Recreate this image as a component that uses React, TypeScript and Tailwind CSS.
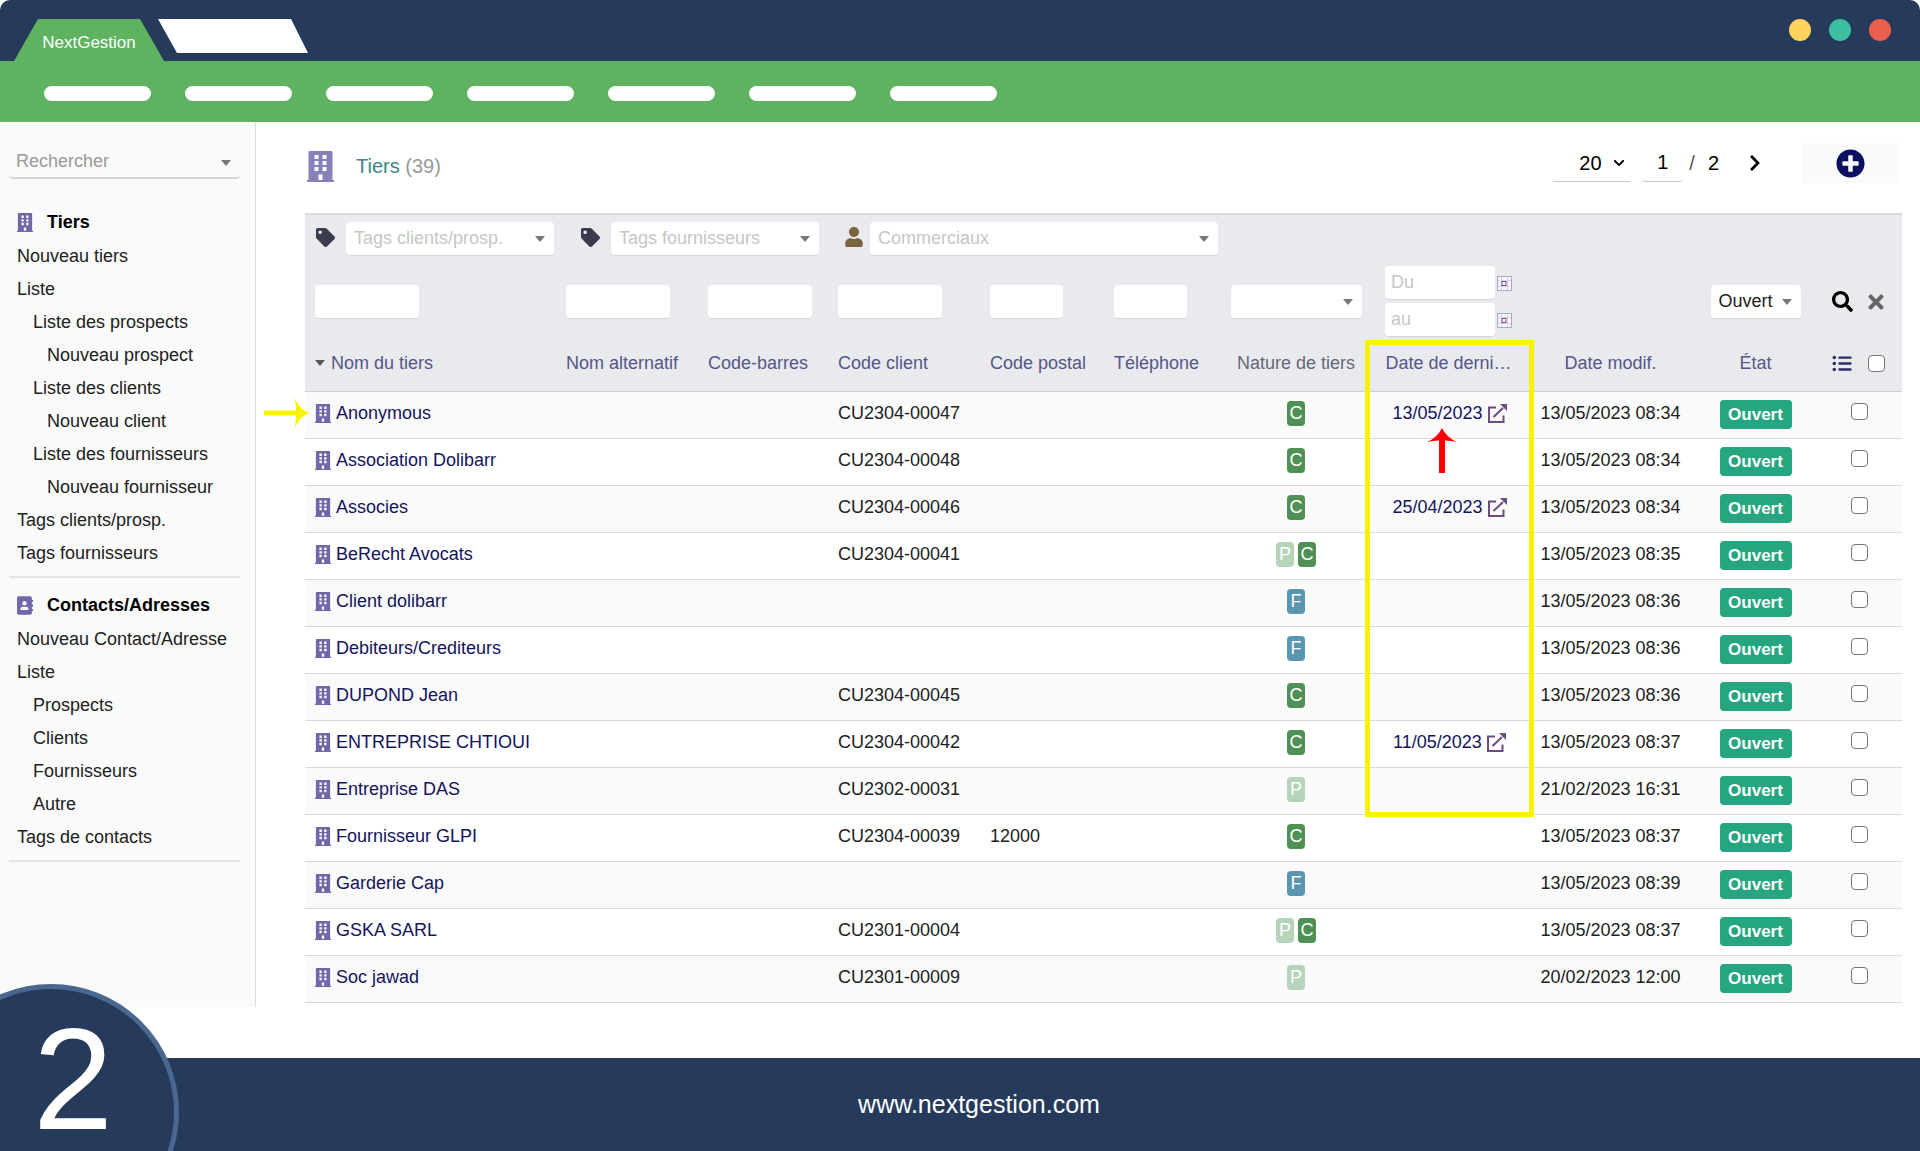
import React, { useState } from 'react';
import {
  FaAddressBook,
  FaChevronDown,
  FaChevronRight,
  FaListUl,
  FaPlusCircle,
  FaSearch,
  FaTag,
  FaTimes,
  FaUser,
} from 'react-icons/fa';

type Nature = 'C' | 'P' | 'F';

interface Company {
  name: string;
  code?: string;
  zip?: string;
  nature: Nature[];
  lastDate?: string;
  modified: string;
}

const companies: Company[] = [
  { name: 'Anonymous', code: 'CU2304-00047', nature: ['C'], lastDate: '13/05/2023', modified: '13/05/2023 08:34' },
  { name: 'Association Dolibarr', code: 'CU2304-00048', nature: ['C'], modified: '13/05/2023 08:34' },
  { name: 'Associes', code: 'CU2304-00046', nature: ['C'], lastDate: '25/04/2023', modified: '13/05/2023 08:34' },
  { name: 'BeRecht Avocats', code: 'CU2304-00041', nature: ['P', 'C'], modified: '13/05/2023 08:35' },
  { name: 'Client dolibarr', nature: ['F'], modified: '13/05/2023 08:36' },
  { name: 'Debiteurs/Crediteurs', nature: ['F'], modified: '13/05/2023 08:36' },
  { name: 'DUPOND Jean', code: 'CU2304-00045', nature: ['C'], modified: '13/05/2023 08:36' },
  { name: 'ENTREPRISE CHTIOUI', code: 'CU2304-00042', nature: ['C'], lastDate: '11/05/2023', modified: '13/05/2023 08:37' },
  { name: 'Entreprise DAS', code: 'CU2302-00031', nature: ['P'], modified: '21/02/2023 16:31' },
  { name: 'Fournisseur GLPI', code: 'CU2304-00039', zip: '12000', nature: ['C'], modified: '13/05/2023 08:37' },
  { name: 'Garderie Cap', nature: ['F'], modified: '13/05/2023 08:39' },
  { name: 'GSKA SARL', code: 'CU2301-00004', nature: ['P', 'C'], modified: '13/05/2023 08:37' },
  { name: 'Soc jawad', code: 'CU2301-00009', nature: ['P'], modified: '20/02/2023 12:00' },
];

const tiersMenu = [
  { label: 'Nouveau tiers', level: 0 },
  { label: 'Liste', level: 0 },
  { label: 'Liste des prospects', level: 1 },
  { label: 'Nouveau prospect', level: 2 },
  { label: 'Liste des clients', level: 1 },
  { label: 'Nouveau client', level: 2 },
  { label: 'Liste des fournisseurs', level: 1 },
  { label: 'Nouveau fournisseur', level: 2 },
  { label: 'Tags clients/prosp.', level: 0 },
  { label: 'Tags fournisseurs', level: 0 },
];

const contactsMenu = [
  { label: 'Nouveau Contact/Adresse', level: 0 },
  { label: 'Liste', level: 0 },
  { label: 'Prospects', level: 1 },
  { label: 'Clients', level: 1 },
  { label: 'Fournisseurs', level: 1 },
  { label: 'Autre', level: 1 },
  { label: 'Tags de contacts', level: 0 },
];

const indent = ['pl-2', 'pl-6', 'pl-[38px]'];

const natureColor: Record<Nature, string> = {
  C: 'bg-[#4f9155]',
  P: 'bg-[#b5d4b9]',
  F: 'bg-[#5a96b0]',
};

const field = 'h-[34px] rounded-[4px] bg-white border-b border-[#d6d6da] outline-none placeholder:text-[#c6c6c6]';
const checkbox = 'block size-[17px] shrink-0 appearance-none rounded-[4px] border border-[#767676] bg-white checked:bg-[#263b5c]';

function Caret({ className = '' }: { className?: string }) {
  return (
    <svg viewBox="0 0 10 6" className={`h-[6px] w-[10px] pointer-events-none ${className}`} fill="currentColor">
      <path d="M0 0h10L5 6z" />
    </svg>
  );
}

function BuildingIcon({ className = '' }: { className?: string }) {
  return (
    <svg viewBox="0 0 27 31" preserveAspectRatio="none" className={className} fill="currentColor" fillRule="evenodd">
      <path d="M2.500 0h22a1 1 0 0 1 1 1v28h1.500v2H0v-2h1.500V1a1 1 0 0 1 1-1zM7.500 4v4h4V4zM15.500 4v4h4V4zM7.500 10v4h4v-4zM15.500 10v4h4v-4zM7.500 16v4h4v-4zM15.500 16v4h4v-4zM11.500 23.500V29h4v-5.500z" />
    </svg>
  );
}

// Native select with the flat look and a small triangle on the right
function Select({ label, className = '', tone = 'text-[#c6c6c6]', children }: {
  label: string;
  className?: string;
  tone?: string;
  children?: React.ReactNode;
}) {
  return (
    <span className={`relative inline-flex items-center align-middle ${className}`}>
      <select aria-label={label} className={`${field} ${tone} w-full appearance-none pl-2 pr-6`}>
        {children}
      </select>
      <Caret className="absolute right-[9px] text-[#777]" />
    </span>
  );
}

function ExternalIcon() {
  return (
    <svg viewBox="0 0 19 19" className="size-[19px]" fill="none" stroke="#6b4c80" strokeWidth="2">
      <path d="M8 3.500H1v14.500h14.500V11.500M5.500 13L15 4" />
      <path d="M12 0h7v7z" fill="#6b4c80" stroke="none" />
    </svg>
  );
}

function CalendarIcon() {
  return (
    <svg viewBox="0 0 15 15" className="size-[15px]">
      <rect x="0.500" y="0.500" width="14" height="14" fill="#f6f6fa" stroke="#a9a9c8" />
      <path d="M1 4.500h13M1 10.500h13M4.500 1v13M10.500 1v13" stroke="#d4d4e2" />
      <rect x="5" y="5.500" width="4" height="4" fill="#fff" stroke="#7d4a9c" />
    </svg>
  );
}

function MenuSection({ title, icon, items }: {
  title: string;
  icon: React.ReactNode;
  items: { label: string; level: number }[];
}) {
  return (
    <section className="border-b-2 border-[#e3e3e3] pb-[6px]">
      <h2 className="flex h-9 items-center pl-2 font-bold text-black">
        <span className="w-[30px] text-[#6f67a8]">{icon}</span>
        {title}
      </h2>
      <ul>
        {items.map((item) => (
          <li key={item.label} className={`h-[33px] leading-[33px] whitespace-nowrap ${indent[item.level]}`}>
            <a href="#">{item.label}</a>
          </li>
        ))}
      </ul>
    </section>
  );
}

function Row({ company, first }: { company: Company; first: boolean }) {
  return (
    <tr className="h-[47px] border-b border-[#d9d9d9] odd:bg-[#fafafa]">
      <td className="relative pl-[10px] pb-[2px]">
        {first && (
          <svg viewBox="0 0 45 30" className="absolute -left-[41px] top-[6px] h-[30px] w-[45px]" fill="#f8f400">
            <path d="M0 12.500h32C32 8 31.500 4 30.500 0 34 7 38 12 45 15 38 18 34 23 30.500 30c1-4 1.500-8 1.500-12.500H0z" />
          </svg>
        )}
        <a href="#" className="flex items-center gap-[5px] text-[#14145a]">
          <BuildingIcon className="h-[19px] w-4 text-[#6f67a8]" />
          {company.name}
        </a>
      </td>
      <td />
      <td />
      <td className="pl-[10px] pb-[2px]">{company.code}</td>
      <td className="pl-[10px] pb-[2px]">{company.zip}</td>
      <td />
      <td className="pb-[2px]">
        <div className="flex justify-center gap-1">
          {company.nature.map((n) => (
            <span key={n} className={`h-[25px] w-[18px] rounded-[4px] text-center leading-[25px] text-white ${natureColor[n]}`}>
              {n}
            </span>
          ))}
        </div>
      </td>
      <td className="relative pb-[2px]">
        {company.lastDate && (
          <a href="#" className="flex items-center justify-center gap-[5px] pl-[2px] text-[#14145a]">
            {company.lastDate}
            <ExternalIcon />
          </a>
        )}
        {first && (
          <svg viewBox="0 0 30 45" className="absolute left-[57px] top-[36px] z-10 h-[45px] w-[30px]" fill="#fe0000">
            <path d="M15 0c3 6 8 11 15 14-4-1-8-1.500-12-1.500V45h-6V12.500C8 12.500 4 13 0 14 7 11 12 6 15 0z" />
          </svg>
        )}
      </td>
      <td className="pb-[2px] text-center">{company.modified}</td>
      <td>
        <span className="mx-auto block h-[29px] w-[72px] rounded-[4px] bg-[#25a580] text-center text-[17px] font-bold leading-[29px] text-white">
          Ouvert
        </span>
      </td>
      <td className="pb-[6px]">
        <input type="checkbox" aria-label={company.name} className={`${checkbox} mx-auto`} />
      </td>
    </tr>
  );
}

export default function App() {
  const [search, setSearch] = useState('');

  return (
    <div className="flex min-h-screen flex-col overflow-hidden bg-white font-['Liberation_Sans',Arial,sans-serif] text-[18px] text-[#212121]">
      {/* Window bar */}
      <header className="rounded-t-[10px] bg-[#263b5c]">
        <div className="flex h-[61px] items-end pl-[14px]">
          <div className="relative flex h-[42px] w-[150px] items-center justify-center pt-[6px] text-[17px] text-white">
            <svg viewBox="0 0 150 42" className="absolute inset-0 size-full" fill="#5eb260">
              <path d="M24 0h102l24 42H0z" />
            </svg>
            <span className="relative">NextGestion</span>
          </div>
          <svg viewBox="0 0 150 42" className="-ml-[6px] h-[42px] w-[150px]" fill="#fff">
            <path d="M0 0h133l17 34H19z" />
          </svg>
          <div className="ml-auto mr-[29px] flex gap-[18px] self-center pb-[2px]">
            <span className="size-[22px] rounded-full bg-[#ffd35e]" />
            <span className="size-[22px] rounded-full bg-[#3dbfa2]" />
            <span className="size-[22px] rounded-full bg-[#e9604f]" />
          </div>
        </div>
        <nav className="flex h-[61px] items-center gap-[34px] bg-[#5eb260] pl-11 pt-1">
          {[...Array(7)].map((_, i) => (
            <span key={i} className="h-[15px] w-[107px] rounded-full bg-white" />
          ))}
        </nav>
      </header>

      <div className="flex flex-1 items-start pb-[51px]">
        {/* Left menu */}
        <aside className="w-64 shrink-0 self-stretch border-r border-[#dcdcdc] bg-[#fafafa] pl-[9px] pr-[15px] pt-5">
          <div className="relative mb-[25px] flex items-center">
            <input
              type="text"
              value={search}
              onChange={(e) => setSearch(e.target.value)}
              aria-label="Rechercher"
              placeholder="Rechercher"
              className="h-[37px] w-full rounded-[4px] border-b-2 border-[#d4d4d4] pl-[7px] pt-1 outline-none placeholder:text-[#999]"
            />
            <Caret className="absolute right-[9px] top-[18px] text-[#777]" />
          </div>
          <MenuSection title="Tiers" icon={<BuildingIcon className="h-[19px] w-4" />} items={tiersMenu} />
          <div className="pt-[9px]">
            <MenuSection title="Contacts/Adresses" icon={<FaAddressBook className="h-[19px] w-4" />} items={contactsMenu} />
          </div>
        </aside>

        <main className="min-w-0 flex-1 pl-[49px] pr-[18px]">
          <div className="flex h-[91px] items-start pt-[21px]">
            <h1 className="flex h-[46px] items-center text-[20px] text-[#3b8585]">
              <BuildingIcon className="ml-[2px] mr-[22px] h-[31px] w-[27px] text-[#8681b6]" />
              Tiers&nbsp;<span className="text-[#999]">(39)</span>
            </h1>
            <div className="ml-auto flex h-10 items-center text-[20px] text-black">
              <span className="relative flex items-center">
                <select aria-label="Lignes par page" className="h-[37px] w-[77px] appearance-none border-b border-[#c8c8c8] pl-[26px] outline-none">
                  <option>20</option>
                </select>
                <FaChevronDown className="pointer-events-none absolute right-[5px] size-3" />
              </span>
              <input type="text" aria-label="Page" defaultValue="1" className="ml-3 h-[37px] w-[41px] rounded-[4px] border-b border-[#c8c8c8] text-center outline-none" />
              <span className="ml-[6px] text-[#555]">/</span>
              <span className="ml-[13px]">2</span>
              <button type="button" aria-label="Suivant" className="ml-[28px]">
                <FaChevronRight className="h-[18px] w-4" />
              </button>
              <button type="button" aria-label="Nouveau tiers" className="ml-[38px] mr-[3px] flex h-10 w-[98px] items-center justify-center bg-[#fafafa]">
                <FaPlusCircle className="size-[29px] text-[#0b1060]" />
              </button>
            </div>
          </div>

          <div className="flex h-[50px] items-center border-t-2 border-[#d9d9dc] bg-[#e9eaed] pl-[11px]">
            <FaTag className="mr-[11px] mb-1 size-[19px] text-[#3b3b50]" />
            <Select label="Tags clients/prosp." className="w-[208px]">
              <option>Tags clients/prosp.</option>
            </Select>
            <FaTag className="ml-[27px] mr-[11px] mb-1 size-[19px] text-[#3b3b50]" />
            <Select label="Tags fournisseurs" className="w-[208px]">
              <option>Tags fournisseurs</option>
            </Select>
            <FaUser className="ml-[26px] mr-[7px] mb-1 h-[20px] w-[18px] text-[#7b6340]" />
            <Select label="Commerciaux" className="w-[348px]">
              <option>Commerciaux</option>
            </Select>
          </div>

          <table className="w-full table-fixed border-collapse">
            <colgroup>
              <col className="w-[251px]" />
              <col className="w-[142px]" />
              <col className="w-[130px]" />
              <col className="w-[152px]" />
              <col className="w-[124px]" />
              <col className="w-[118px]" />
              <col className="w-[148px]" />
              <col className="w-[157px]" />
              <col className="w-[167px]" />
              <col className="w-[123px]" />
              <col className="w-[85px]" />
            </colgroup>
            <thead className="bg-[#e9eaed] text-left text-[#55568a]">
              <tr className="h-[77px]">
                <td className="pl-[10px]"><input type="text" aria-label="Nom du tiers" className={`${field} w-[104px]`} /></td>
                <td className="pl-[10px]"><input type="text" aria-label="Nom alternatif" className={`${field} w-[104px]`} /></td>
                <td className="pl-[10px]"><input type="text" aria-label="Code-barres" className={`${field} w-[104px]`} /></td>
                <td className="pl-[10px]"><input type="text" aria-label="Code client" className={`${field} w-[104px]`} /></td>
                <td className="pl-[10px]"><input type="text" aria-label="Code postal" className={`${field} w-[73px]`} /></td>
                <td className="pl-[10px]"><input type="text" aria-label="Téléphone" className={`${field} w-[73px]`} /></td>
                <td className="text-center">
                  <Select label="Nature de tiers" className="w-[131px]">
                    <option></option>
                  </Select>
                </td>
                <td>
                  <div className="flex flex-col items-center gap-[3px]">
                    {['Du', 'au'].map((hint) => (
                      <span key={hint} className="flex items-center gap-[2px]">
                        <input type="text" aria-label={hint} placeholder={hint} className={`${field} w-[110px] pl-[6px]`} />
                        <button type="button" aria-label={`Calendrier ${hint}`}><CalendarIcon /></button>
                      </span>
                    ))}
                  </div>
                </td>
                <td />
                <td className="text-center">
                  <Select label="État" tone="text-[#212121]" className="w-[90px]">
                    <option>Ouvert</option>
                  </Select>
                </td>
                <td>
                  <div className="flex items-center justify-center gap-3">
                    <button type="button" aria-label="Rechercher"><FaSearch className="size-[21px] text-black" /></button>
                    <button type="button" aria-label="Effacer"><FaTimes className="size-[22px] text-[#666]" /></button>
                  </div>
                </td>
              </tr>
              <tr className="h-[51px] border-b border-[#d0d0d4] *:pb-1 *:font-normal">
                <th className="pl-[10px]">
                  <span className="flex items-center gap-[6px]">
                    <Caret className="text-[#555]" />
                    Nom du tiers
                  </span>
                </th>
                <th className="pl-[10px]">Nom alternatif</th>
                <th className="pl-[10px]">Code-barres</th>
                <th className="pl-[10px]">Code client</th>
                <th className="pl-[10px]">Code postal</th>
                <th className="pl-[10px]">Téléphone</th>
                <th className="text-center text-[#66677c]">Nature de tiers</th>
                <th className="relative text-center">
                  Date de derni…
                  <span className="pointer-events-none absolute -left-[5px] -right-[7px] top-0 h-[477px] border-[5px] border-[#f8f400]" />
                </th>
                <th className="text-center">Date modif.</th>
                <th className="text-center">État</th>
                <th>
                  <div className="flex items-center justify-center gap-4 pr-[2px]">
                    <FaListUl className="h-[19px] w-5 text-[#2b2f66]" />
                    <input type="checkbox" aria-label="Tout sélectionner" className={checkbox} />
                  </div>
                </th>
              </tr>
            </thead>
            <tbody>
              {companies.map((company, i) => (
                <Row key={company.name} company={company} first={i === 0} />
              ))}
            </tbody>
          </table>
        </main>
      </div>

      {/* Footer with step number */}
      <footer className="relative flex h-[93px] items-center justify-center bg-[#263b5c] pl-[38px] text-[25px] text-white">
        <div className="absolute -left-[77px] -top-[74px] size-64 rounded-full border-[5px] border-[#4a678f] bg-[#263b5c]" />
        <span className="absolute left-[33px] -top-[50px] text-[144px] leading-[144px]">2</span>
        <a href="#" className="relative">www.nextgestion.com</a>
      </footer>
    </div>
  );
}
